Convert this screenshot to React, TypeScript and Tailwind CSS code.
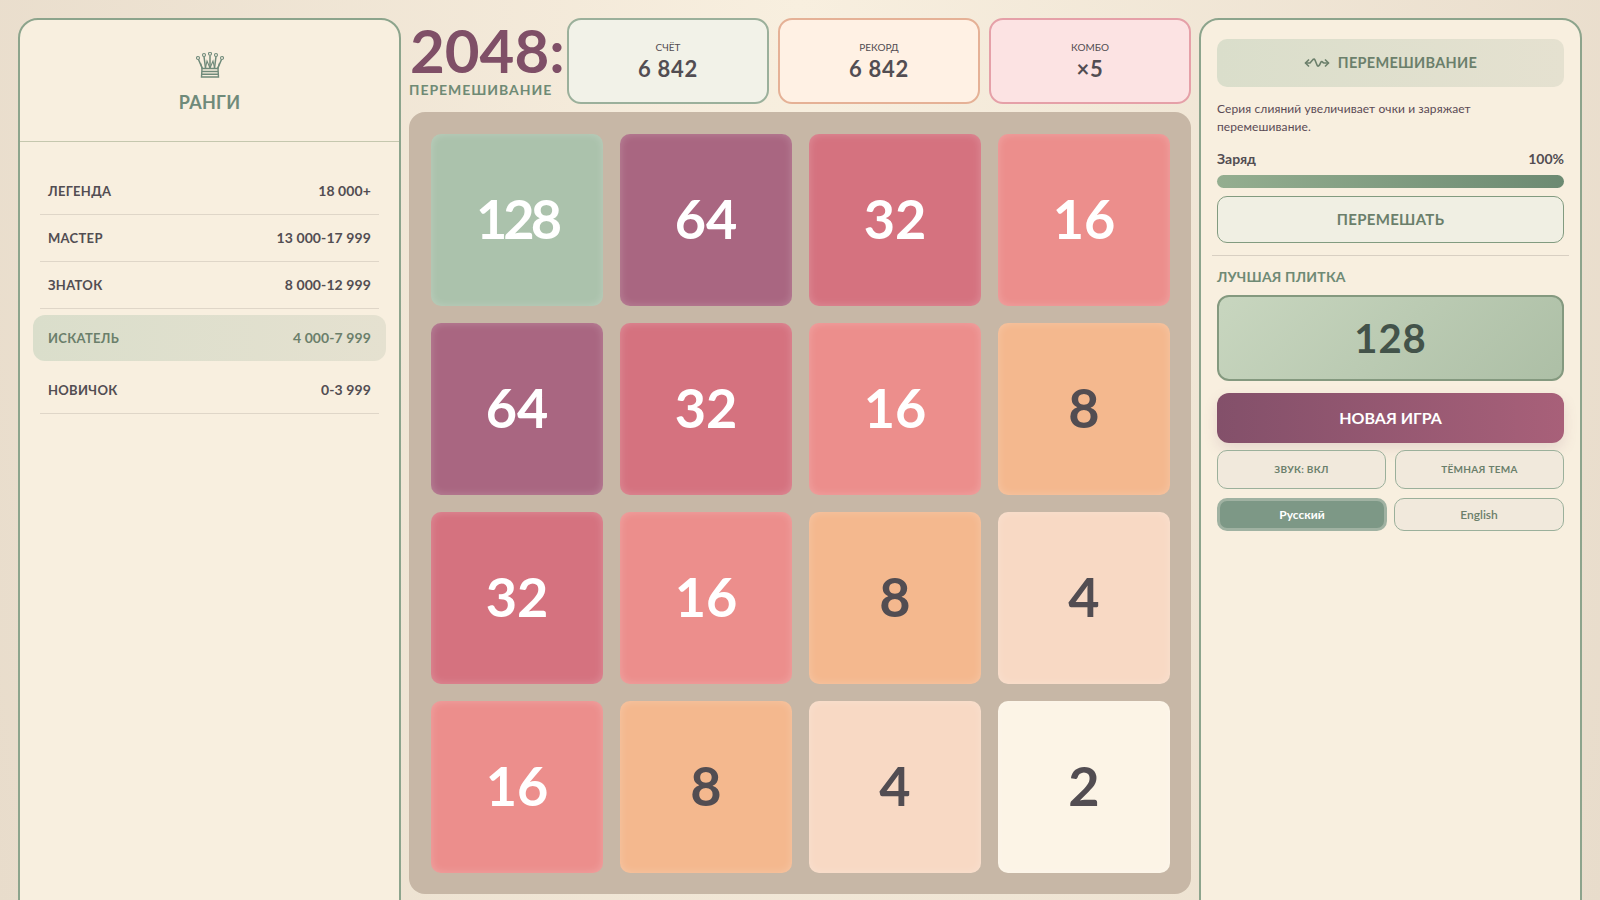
import { ReactNode } from "react";

const ranks = [
  { name: "ЛЕГЕНДА", range: "18 000+" },
  { name: "МАСТЕР", range: "13 000-17 999" },
  { name: "ЗНАТОК", range: "8 000-12 999" },
  { name: "ИСКАТЕЛЬ", range: "4 000-7 999", active: true },
  { name: "НОВИЧОК", range: "0-3 999" },
];

const board = [128, 64, 32, 16, 64, 32, 16, 8, 32, 16, 8, 4, 16, 8, 4, 2];

const tileClass: Record<number, string> = {
  2: "bg-[#fcf4e6] text-[#524d52]",
  4: "bg-[#f8d9c4] text-[#524d52]",
  8: "bg-[#f4b88e] text-[#524d52]",
  16: "bg-[#ec8e8c] text-white",
  32: "bg-[#d5727f] text-white",
  64: "bg-[#a96681] text-white",
  128: "bg-[#abc2ac] text-white tracking-[-4px]",
};

function Crown() {
  return (
    <svg width="28" height="26" viewBox="0 0 28 26" fill="none" stroke="#6f8a7a" strokeWidth="1.1">
      <circle cx="2" cy="6" r="1.5" />
      <circle cx="8" cy="3" r="1.5" />
      <circle cx="14" cy="1.8" r="1.5" />
      <circle cx="20" cy="3" r="1.5" />
      <circle cx="26" cy="6" r="1.5" />
      <path d="M2.5 7.5 L6.5 17 M8 4.5 L9.5 16 M14 3.5 L14 16 M20 4.5 L18.5 16 M25.5 7.5 L21.5 17" strokeWidth="1.5" />
      <path d="M6.5 17 L4.5 11 M9.5 16 L11 9 L14 16 L17 9 L18.5 16 M21.5 17 L23.5 11" />
      <path d="M6 16.5 H22 L22.5 25 H5.5 Z" fill="#f8efdf" strokeWidth="1.4" />
      <path d="M6 19.5 H22 M6 22.2 H22" strokeWidth="1.5" />
    </svg>
  );
}

function ShuffleIcon() {
  return (
    <svg width="26" height="12" viewBox="0 0 26 12" fill="none" stroke="#6b7f6b" strokeWidth="1.6">
      <path d="M5 2.5 L1.5 6 L5 9.5 M21 2.5 L24.5 6 L21 9.5" />
      <path d="M1.5 6 H6 L9 2.5 C10 1.8 10.5 2 11 3 L13 8 C13.5 9.5 14.5 9.5 15.5 8 L17 5 C18 3.6 18.5 5.5 20 6 H24.5" />
    </svg>
  );
}

function StatCard({ label, value, className }: { label: string; value: string; className: string }) {
  return (
    <div className={`flex flex-1 flex-col items-center justify-center rounded-[14px] border-2 ${className}`}>
      <div className="text-[10px] leading-[13px] text-[#524d52]">{label}</div>
      <div className="mt-[2px] text-[22px] font-bold leading-[26px] tracking-[0.7px] text-[#524d52]">{value}</div>
    </div>
  );
}

function SmallButton({ children, className }: { children: ReactNode; className: string }) {
  return <button className={`flex items-center justify-center rounded-[10px] ${className}`}>{children}</button>;
}

export default function App() {
  return (
    <div className="flex h-screen items-start gap-[8px] overflow-hidden bg-[radial-gradient(ellipse_900px_2000px_at_50%_0%,#f8efdf,#e8dccb)] p-[18px] font-['Lato','Noto_Sans',sans-serif] text-[#524d52]">
      <aside className="h-[1000px] w-[383px] shrink-0 rounded-[20px] border-2 border-[#8ca48c] bg-[#f8efdf]">
        <div className="flex h-[122px] flex-col items-center border-b border-[#c5c7ae] pt-[32px]">
          <Crown />
          <h2 className="mt-[12px] text-[18px] font-bold leading-6 tracking-[0.3px] text-[#6f8a7a]">РАНГИ</h2>
        </div>
        <div className="px-[20px] pt-[26px]">
          {ranks.map((r) =>
            r.active ? (
              <div
                key={r.name}
                className="mx-[-7px] my-[6px] flex h-[46px] items-center justify-between rounded-xl bg-[linear-gradient(90deg,#dadecb,#e5e1d0)] px-[15px] font-bold leading-[18px] text-[#6b7f6b]"
              >
                <span className="text-[13px] tracking-[0.3px]">{r.name}</span>
                <span className="text-[14px] tracking-[0.1px]">{r.range}</span>
              </div>
            ) : (
              <div
                key={r.name}
                className="flex h-[47px] items-center justify-between border-b border-[#dfd6c8] px-2 font-bold leading-[18px]"
              >
                <span className="text-[13px] tracking-[0.3px]">{r.name}</span>
                <span className="text-[14px] tracking-[0.1px]">{r.range}</span>
              </div>
            ),
          )}
        </div>
      </aside>

      <main className="w-[782px] shrink-0">
        <div className="flex h-[86px] gap-[9px]">
          <div className="w-[149px] shrink-0">
            <h1 className="mt-[5px] pl-[1px] text-[60px] font-bold leading-[54px] text-[#7f4f67]">2048:</h1>
            <div className="mt-[4px] text-[14px] font-bold leading-[18px] tracking-[0.95px] text-[#6f8a75]">ПЕРЕМЕШИВАНИЕ</div>
          </div>
          <StatCard label="СЧЁТ" value="6 842" className="border-[#9bb09b] bg-[#f2f2e8]" />
          <StatCard label="РЕКОРД" value="6 842" className="border-[#e5b196] bg-[#fff1e4]" />
          <StatCard label="КОМБО" value="×5" className="border-[#e5a0a8] bg-[#fce3e3]" />
        </div>
        <div className="mt-[8px] grid h-[782px] grid-cols-[repeat(4,172px)] grid-rows-[repeat(4,172px)] gap-[17px] rounded-2xl bg-[#c7b7a6] p-[22px]">
          {board.map((v, i) => (
            <div
              key={i}
              className={`flex items-center justify-center rounded-[10px] pb-[4px] text-[54px] font-bold shadow-[inset_0_0_8px_rgba(255,255,255,0.22)] ${tileClass[v]}`}
            >
              {v}
            </div>
          ))}
        </div>
      </main>

      <aside className="h-[1000px] w-[383px] shrink-0 rounded-[20px] border-2 border-[#8ca48c] bg-[#f8efdf] px-[16px] pt-[19px]">
        <div className="flex h-[48px] items-center justify-center gap-[8px] rounded-[10px] bg-[linear-gradient(90deg,#dadecb,#e5e1d0)] text-[14.5px] font-bold tracking-[0.3px] text-[#6b7f6b]">
          <ShuffleIcon />
          <span>ПЕРЕМЕШИВАНИЕ</span>
        </div>
        <p className="mt-[13px] max-w-[290px] text-[12px] leading-[17.5px] tracking-[0.1px] text-[#5a4a55]">
          Серия слияний увеличивает очки и заряжает перемешивание.
        </p>
        <div className="mt-[15px] flex items-center justify-between text-[14px] font-bold leading-[18px]">
          <span>Заряд</span>
          <span>100%</span>
        </div>
        <div className="mt-[7px] h-[13px] rounded-full bg-[linear-gradient(90deg,#94ae90,#6c8a72)]" />
        <button className="mt-[8px] flex h-[47px] w-full items-center justify-center rounded-[10px] border border-[#829b80] bg-[#f0efe3] text-[15px] font-bold tracking-[0.3px] text-[#6b7f6b]">
          ПЕРЕМЕШАТЬ
        </button>
        <div className="mx-[-5px] mt-[12px] border-t border-[#d8cfc2]" />
        <div className="mt-[12px] text-[14px] font-bold leading-[18px] tracking-[0.2px] text-[#6f8a75]">ЛУЧШАЯ ПЛИТКА</div>
        <div className="mt-[9px] flex h-[86px] items-center justify-center rounded-xl border-2 border-[#84997f] bg-[linear-gradient(135deg,#c8d6bf,#adbfa6)] text-[40px] font-bold tracking-[1px] text-[#43534a]">
          128
        </div>
        <button className="mt-[12px] flex h-[50px] w-full items-center justify-center rounded-xl bg-[linear-gradient(90deg,#83506a,#a86079)] text-[16px] font-bold text-white shadow-[0_6px_14px_rgba(131,80,106,0.15)]">
          НОВАЯ ИГРА
        </button>
        <div className="mt-[7px] grid h-[39px] grid-cols-2 gap-[9px]">
          <SmallButton className="border border-[#9bb09b] bg-[#f1e9dc] text-[10px] font-bold tracking-[0.3px] text-[#6b7f6b]">
            ЗВУК: ВКЛ
          </SmallButton>
          <SmallButton className="border border-[#9bb09b] bg-[#f1e9dc] text-[10px] font-bold tracking-[0.3px] text-[#6b7f6b]">
            ТЁМНАЯ ТЕМА
          </SmallButton>
        </div>
        <div className="mt-[9px] grid h-[33px] grid-cols-2 gap-[7px]">
          <SmallButton className="border-[3px] border-[#a0b2a2] bg-[#7d9886] text-[12px] font-bold text-white">
            Русский
          </SmallButton>
          <SmallButton className="border border-[#9bb09b] bg-[#f1e9dc] text-[12px] font-semibold text-[#6b7f6b]">
            English
          </SmallButton>
        </div>
      </aside>
    </div>
  );
}
